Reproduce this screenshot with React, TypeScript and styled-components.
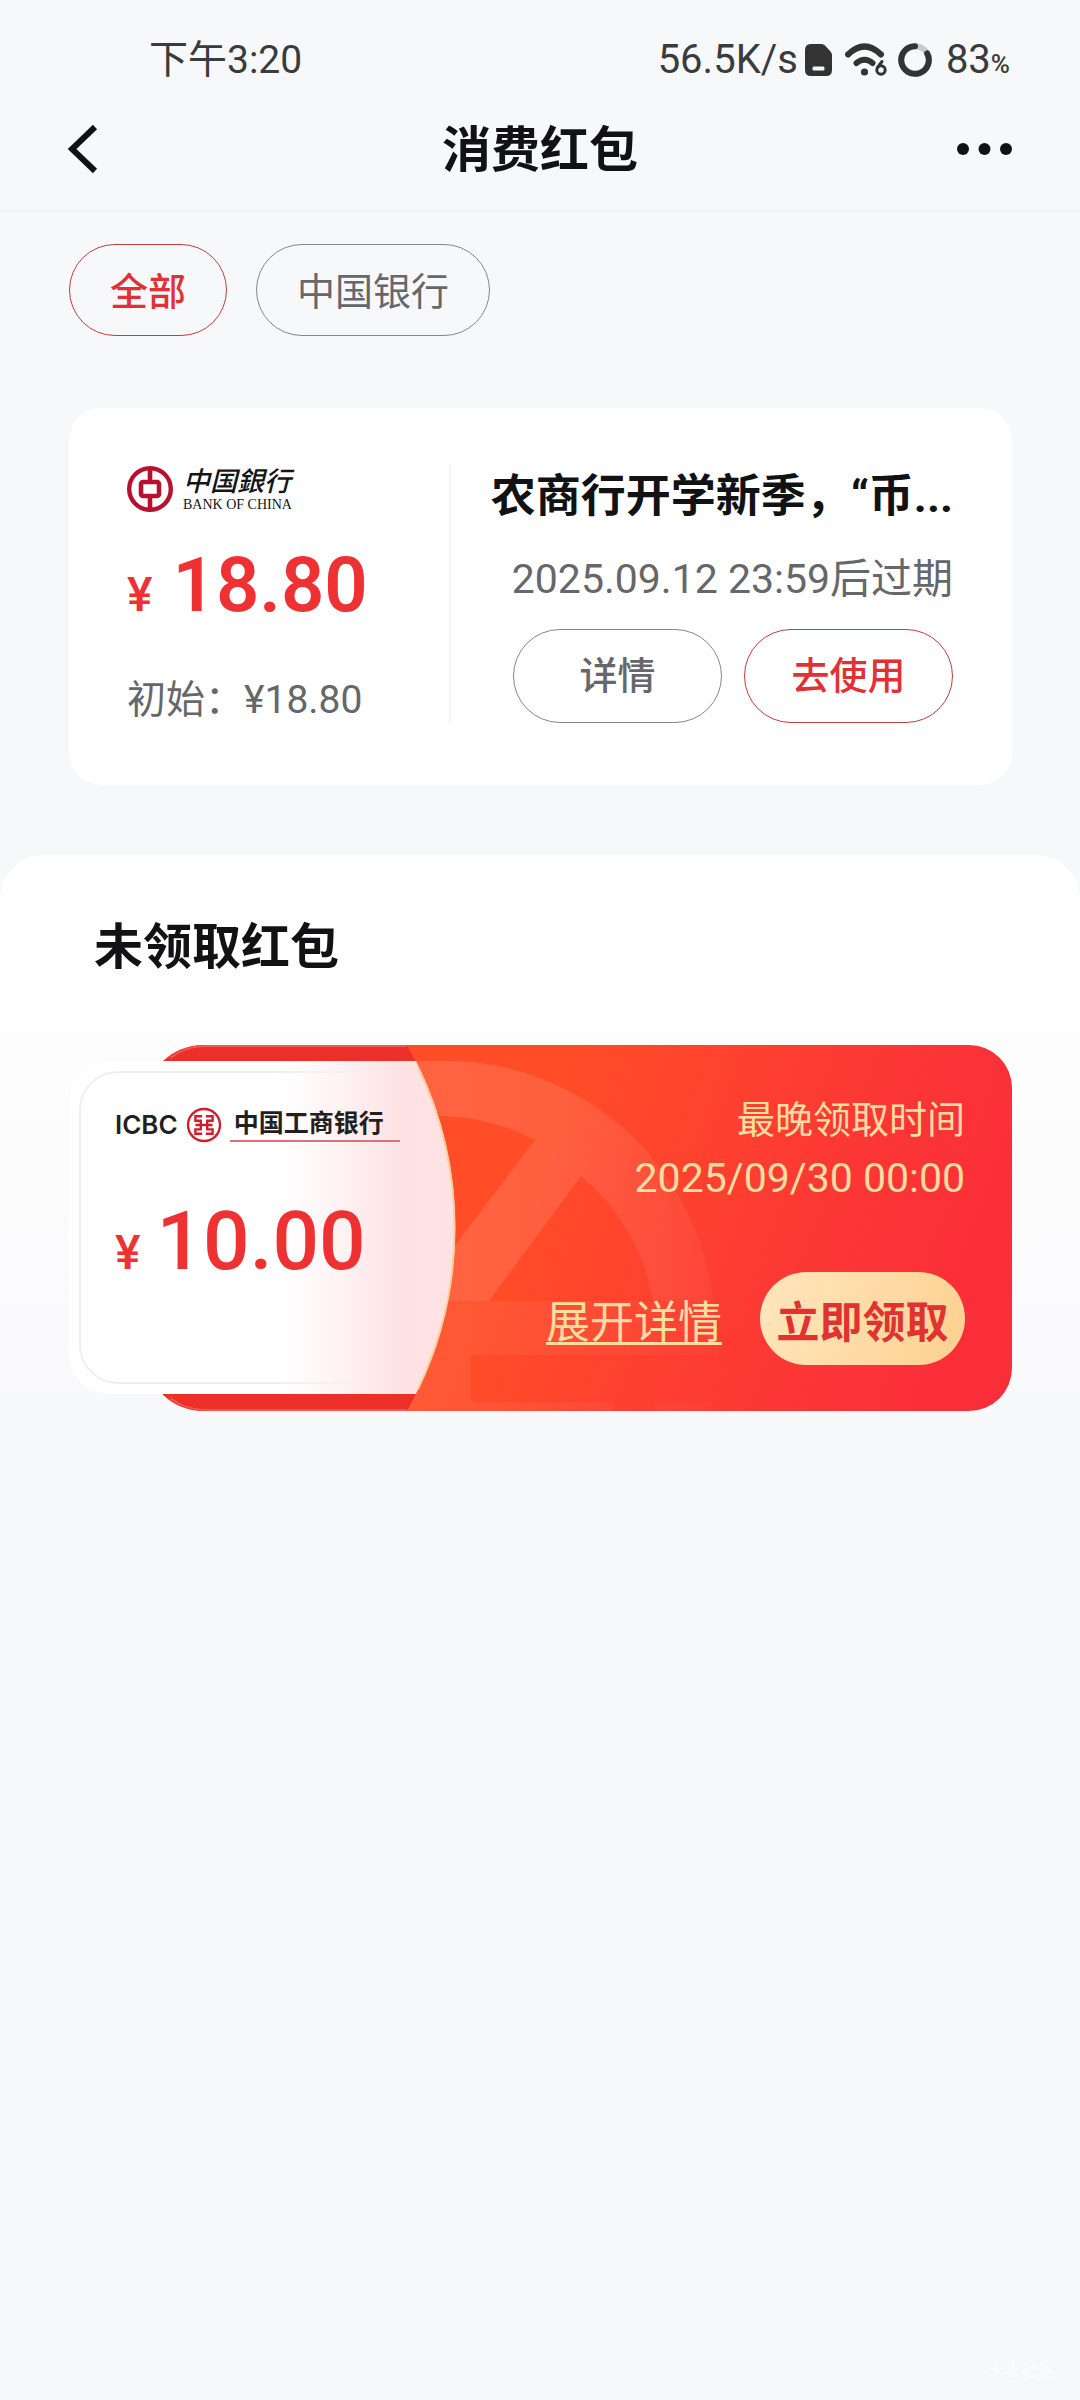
import React from "react";
import styled, { createGlobalStyle, css } from "styled-components";

const GlobalStyle = createGlobalStyle`
  * {
    box-sizing: border-box;
    margin: 0;
    padding: 0;
  }
  body {
    background: #f7f8fa;
    color: #121214;
    font-family: Roboto, "Noto Sans CJK SC", sans-serif;
  }
  button {
    font-family: inherit;
    background: none;
    border: 0;
    cursor: pointer;
  }
`;

const Page = styled.div`
  position: relative;
  min-height: 100vh;
`;

const StatusBar = styled.div`
  display: flex;
  align-items: center;
  justify-content: space-between;
  height: 88px;
  padding: 32px 70px 0 149px;
  color: #3a3b3c;
  font-size: 39px;
  line-height: 56px;
`;

const StatusIcons = styled.div`
  display: flex;
  align-items: center;
  font-size: 40px;
`;

const StatusSvg = styled.svg<{ $gap: number }>`
  display: block;
  margin-left: ${(p) => p.$gap}px;
`;

const Battery = styled.span`
  margin-left: 14px;
`;

const Percent = styled.small`
  font-size: 26px;
  font-weight: 500;
  line-height: 24px;
`;

const NavBar = styled.header`
  display: grid;
  grid-template-columns: 1fr auto 1fr;
  align-items: center;
  height: 124px;
  padding: 0 68px;
  border-bottom: 2px solid #f1f2f4;
`;

const NavButton = styled.button<{ $end?: boolean }>`
  display: flex;
  align-items: center;
  height: 60px;
  justify-self: ${(p) => (p.$end ? "end" : "start")};
`;

const NavTitle = styled.h1`
  padding-top: 4px;
  font-size: 49px;
  font-weight: 700;
  line-height: 64px;
`;

const Tabs = styled.nav`
  display: flex;
  gap: 29px;
  padding: 32px 69px 0;
`;

const outline = css<{ $accent?: boolean }>`
  border: 1px solid ${(p) => (p.$accent ? "#c43c40" : "#85878a")};
  border-radius: 47px;
  color: ${(p) => (p.$accent ? "#e03234" : "#66676a")};
  font-size: 38px;
  line-height: 56px;
`;

const Tab = styled.button<{ $accent?: boolean }>`
  ${outline}
  height: 92px;
  padding: 4px 40px 0;
  font-weight: ${(p) => (p.$accent ? 500 : 400)};
`;

const Card = styled.article`
  display: flex;
  margin: 72px 68px 0 69px;
  padding: 56px 59px 62px 58px;
  border-radius: 32px;
  background: #fff;
`;

const CardLeft = styled.div`
  display: flex;
  flex-direction: column;
  gap: 27px;
  flex: 0 0 324px;
  border-right: 2px solid #f6f6f7;
`;

const BankRow = styled.div`
  display: flex;
  align-items: center;
  gap: 10px;
  height: 50px;
`;

const BankWords = styled.div`
  display: flex;
  flex-direction: column;
  color: #151515;
`;

const BankScript = styled.span`
  font-size: 27px;
  font-style: italic;
  font-weight: 500;
  line-height: 32px;
`;

const BankLatin = styled.span`
  font-family: "Liberation Serif", serif;
  font-size: 14px;
  line-height: 14px;
`;

const Amount = styled.p<{ $large?: boolean }>`
  display: flex;
  align-items: baseline;
  gap: ${(p) => (p.$large ? 16 : 20)}px;
  color: #ee3234;
  font-size: ${(p) => (p.$large ? 82 : 76)}px;
  font-weight: ${(p) => (p.$large ? 500 : 600)};
  line-height: 88px;
`;

const Yen = styled.span`
  font-size: 48px;
  font-weight: 500;
`;

const Initial = styled.p`
  margin-top: auto;
  color: #66676a;
  font-size: 39px;
  line-height: 46px;
`;

const CardRight = styled.div`
  display: flex;
  flex: 1;
  flex-direction: column;
  align-items: flex-end;
  gap: 22px;
  min-width: 0;
  padding-top: 1px;
  padding-left: 32px;
`;

const CardTitle = styled.h2`
  max-width: 100%;
  overflow: hidden;
  font-size: 45px;
  font-weight: 700;
  line-height: 64px;
  text-overflow: ellipsis;
  white-space: nowrap;
`;

const Expiry = styled.p`
  color: #66676a;
  font-size: 41px;
  line-height: 56px;
  white-space: nowrap;
`;

const CardActions = styled.div`
  display: flex;
  gap: 22px;
`;

const PillButton = styled.button<{ $accent?: boolean }>`
  ${outline}
  width: 209px;
  height: 94px;
  font-weight: 500;
`;

const Unclaimed = styled.section`
  margin-top: 70px;
  padding: 61px 68px 100px 69px;
  border-radius: 44px 44px 0 0;
  background: linear-gradient(180deg, #fff 0%, #fdfdfd 30%, #f7f8fa 100%);
`;

const SectionTitle = styled.h2`
  padding-left: 25px;
  font-size: 49px;
  font-weight: 700;
  line-height: 64px;
`;

const Coupon = styled.article`
  position: relative;
  display: flex;
  height: 366px;
  margin-top: 65px;
`;

const CouponFill = styled.div`
  position: absolute;
  inset: 0 0 0 92px;
  border-radius: 43px;
  background: linear-gradient(110deg, #ff4d27 42%, #fc3a33 70%, #fa2e39 92%);
`;

const CouponArt = styled.svg`
  position: absolute;
  top: 0;
  left: 0;
`;

const CouponLeft = styled.div`
  position: relative;
  flex: 0 0 386px;
  padding: 56px 0 0 46px;
`;

const IcbcRow = styled.div`
  display: flex;
  align-items: center;
  gap: 8px;
  height: 48px;
  margin-bottom: 48px;
  color: #231f20;
`;

const IcbcLatin = styled.span`
  font-family: Inter, sans-serif;
  font-size: 26px;
  font-weight: 600;
  line-height: 36px;
`;

const IcbcName = styled.span`
  padding: 0 16px 0 4px;
  border-bottom: 2px solid #dd7078;
  font-size: 25px;
  font-weight: 700;
  line-height: 32px;
`;

const CouponRight = styled.div`
  position: relative;
  display: flex;
  flex: 1;
  flex-direction: column;
  align-items: flex-end;
  justify-content: space-between;
  padding: 46px 47px 46px 0;
  color: #ffdca0;
  line-height: 58px;
`;

const Deadline = styled.p`
  text-align: right;
`;

const DeadlineLabel = styled.span`
  display: block;
  font-size: 38px;
`;

const DeadlineTime = styled.time`
  display: block;
  font-size: 41px;
`;

const CouponActions = styled.div`
  display: flex;
  align-items: center;
  gap: 38px;
`;

const DetailLink = styled.a`
  padding-top: 12px;
  border-bottom: 3px solid #ffdca0;
  color: inherit;
  font-size: 44px;
  line-height: 38px;
  text-decoration: none;
`;

const ClaimButton = styled.button`
  width: 205px;
  height: 93px;
  border-radius: 47px;
  background: linear-gradient(110deg, #ffe6bd, #fdd190);
  color: #e03230;
  font-size: 43px;
  font-weight: 700;
  white-space: nowrap;
`;

const Watermark = styled.span`
  position: absolute;
  right: 24px;
  bottom: 18px;
  color: #fdfdfe;
  font-size: 17px;
  line-height: 24px;
`;

function SimIcon() {
  return (
    <StatusSvg $gap={7} width="27" height="32" viewBox="0 0 27 32" aria-hidden="true">
      <path
        d="M6 0H16.5Q18.500 0 20 1.500L25.500 7.500Q27 9 27 11V26Q27 32 21 32H6Q0 32 0 26V6Q0 0 6 0Z"
        fill="#333"
      />
      <rect x="7.500" y="22.500" width="12" height="4" rx="1.500" fill="#f7f8fa" />
    </StatusSvg>
  );
}

function WifiIcon() {
  return (
    <StatusSvg $gap={13} width="43" height="34" viewBox="0 0 43 34" aria-hidden="true">
      <g fill="none" stroke="#333" strokeLinecap="round">
        <path d="M3 11.500Q19.500 -4.500 36 11.500" strokeWidth="6" />
        <path d="M11.500 20Q19.500 13.500 27.500 20" strokeWidth="6" />
        <circle cx="36" cy="27" r="4.200" strokeWidth="3" />
        <path d="M32.500 24.500L37 18.500" strokeWidth="3" />
      </g>
      <circle cx="19.500" cy="29" r="3.600" fill="#333" />
    </StatusSvg>
  );
}

function BatteryRing() {
  return (
    <StatusSvg $gap={10} width="34" height="34" viewBox="0 0 34 34" aria-hidden="true">
      <circle cx="17" cy="17" r="13.800" fill="none" stroke="#c9cacc" strokeWidth="6" />
      <path
        d="M29.200 10.500A13.800 13.800 0 1 1 17 3.200"
        fill="none"
        stroke="#333"
        strokeWidth="6"
        strokeLinecap="round"
      />
    </StatusSvg>
  );
}

function BocLogo() {
  return (
    <svg width="46" height="46" viewBox="0 0 46 46" aria-hidden="true">
      <g fill="none" stroke="#b8112f">
        <circle cx="23" cy="23" r="20.800" strokeWidth="4.400" />
        <rect x="14" y="16" width="18" height="14" rx="2" strokeWidth="4.600" />
        <path d="M23 3V15M23 31V43" strokeWidth="4.600" />
      </g>
    </svg>
  );
}

function IcbcLogo() {
  return (
    <svg width="36" height="36" viewBox="-18 -18 36 36" aria-hidden="true">
      <g fill="none" stroke="#cf1f2b" strokeWidth="2.400">
        <circle r="16" />
        <path d="M-1.800 -8.800H-8.600V-4.200H-3.200V0H-8.600M-3.200 0V4.400H-8.600V8.800H-1.800" />
        <path d="M1.800 -8.800H8.600V-4.200H3.200V0H8.600M3.200 0V4.400H8.600V8.800H1.800" />
        <path d="M-4 0H4" />
      </g>
    </svg>
  );
}

function CouponArtwork() {
  return (
    <CouponArt width="660" height="366" viewBox="0 0 660 366" aria-hidden="true">
      <defs>
        <linearGradient id="panel" gradientUnits="userSpaceOnUse" x1="0" y1="0" x2="386" y2="0">
          <stop offset="0.550" stopColor="#fff" />
          <stop offset="0.700" stopColor="#fff3f4" />
          <stop offset="0.860" stopColor="#fee1e3" />
          <stop offset="1" stopColor="#fde2e4" />
        </linearGradient>
        <linearGradient id="glow" x1="0" y1="0" x2="1" y2="0">
          <stop offset="0" stopColor="#fff" stopOpacity="0.130" />
          <stop offset="0.500" stopColor="#fff" stopOpacity="0.110" />
          <stop offset="1" stopColor="#fff" stopOpacity="0.040" />
        </linearGradient>
        <linearGradient id="base" gradientUnits="userSpaceOnUse" x1="340" y1="0" x2="650" y2="0">
          <stop offset="0" stopColor="#fff" stopOpacity="0.070" />
          <stop offset="1" stopColor="#fff" stopOpacity="0.020" />
        </linearGradient>
        <linearGradient id="line" gradientUnits="userSpaceOnUse" x1="0" y1="0" x2="340" y2="0">
          <stop offset="0.600" stopColor="#efeff0" />
          <stop offset="1" stopColor="#efeff0" stopOpacity="0" />
        </linearGradient>
      </defs>
      <path
        d="M338 16Q360 16 376 16A269 269 0 0 1 644 256H584A208 208 0 0 0 512 131L420 256H338V230L387 199L466 95A208 208 0 0 0 371 71L338 16Z"
        fill="url(#glow)"
      />
      <path d="M338 256H644Q648 280 649 310H402V357H544V366H338ZM586 357H643V366H586Z" fill="url(#base)" />
      <path d="M94 16C105 6 118 0 135 0H338A373 373 0 0 1 338 366H135C118 366 105 360 94 350Z" fill="#ec2f28" />
      <path d="M101 13C112 5 122 1 137 1H338" fill="none" stroke="#ef5a58" strokeWidth="2" />
      <path d="M101 353C112 361 122 365 137 365H338" fill="none" stroke="#ef5a58" strokeWidth="2" />
      <path
        d="M40 16H347A373 373 0 0 1 347 349H40A40 40 0 0 1 0 309V56A40 40 0 0 1 40 16Z"
        fill="url(#panel)"
      />
      <path d="M340 27H49A38 38 0 0 0 11 65V300A38 38 0 0 0 49 338H340" fill="none" stroke="url(#line)" strokeWidth="2" />
      <path d="M349 22A373 373 0 0 1 349 344" fill="none" stroke="#fbcf9a" strokeWidth="2" />
    </CouponArt>
  );
}

export default function App() {
  return (
    <Page>
      <GlobalStyle />
      <StatusBar>
        <span>下午3:20</span>
        <StatusIcons>
          <span>56.5K/s</span>
          <SimIcon />
          <WifiIcon />
          <BatteryRing />
          <Battery>
            83<Percent>%</Percent>
          </Battery>
        </StatusIcons>
      </StatusBar>

      <NavBar>
        <NavButton aria-label="返回">
          <svg width="30" height="50" viewBox="0 0 30 50" aria-hidden="true">
            <path d="M27 3L4 25L27 47" fill="none" stroke="#121214" strokeWidth="6" />
          </svg>
        </NavButton>
        <NavTitle>消费红包</NavTitle>
        <NavButton $end aria-label="更多">
          <svg width="55" height="12" viewBox="0 0 55 12" fill="#121214" aria-hidden="true">
            <circle cx="6" cy="6" r="6" />
            <circle cx="27.500" cy="6" r="6" />
            <circle cx="49" cy="6" r="6" />
          </svg>
        </NavButton>
      </NavBar>

      <main>
        <Tabs>
          <Tab $accent>全部</Tab>
          <Tab>中国银行</Tab>
        </Tabs>

        <Card>
          <CardLeft>
            <BankRow>
              <BocLogo />
              <BankWords>
                <BankScript>中国銀行</BankScript>
                <BankLatin>BANK OF CHINA</BankLatin>
              </BankWords>
            </BankRow>
            <Amount>
              <Yen>¥</Yen>
              <span>18.80</span>
            </Amount>
            <Initial>初始：¥18.80</Initial>
          </CardLeft>
          <CardRight>
            <CardTitle>农商行开学新季，“币...</CardTitle>
            <Expiry>2025.09.12 23:59后过期</Expiry>
            <CardActions>
              <PillButton>详情</PillButton>
              <PillButton $accent>去使用</PillButton>
            </CardActions>
          </CardRight>
        </Card>

        <Unclaimed>
          <SectionTitle>未领取红包</SectionTitle>
          <Coupon>
            <CouponFill />
            <CouponArtwork />
            <CouponLeft>
              <IcbcRow>
                <IcbcLatin>ICBC</IcbcLatin>
                <IcbcLogo />
                <IcbcName>中国工商银行</IcbcName>
              </IcbcRow>
              <Amount $large>
                <Yen>¥</Yen>
                <span>10.00</span>
              </Amount>
            </CouponLeft>
            <CouponRight>
              <Deadline>
                <DeadlineLabel>最晚领取时间</DeadlineLabel>
                <DeadlineTime>2025/09/30 00:00</DeadlineTime>
              </Deadline>
              <CouponActions>
                <DetailLink href="#detail">展开详情</DetailLink>
                <ClaimButton>立即领取</ClaimButton>
              </CouponActions>
            </CouponRight>
          </Coupon>
        </Unclaimed>
      </main>
      <Watermark>卡农社区</Watermark>
    </Page>
  );
}
